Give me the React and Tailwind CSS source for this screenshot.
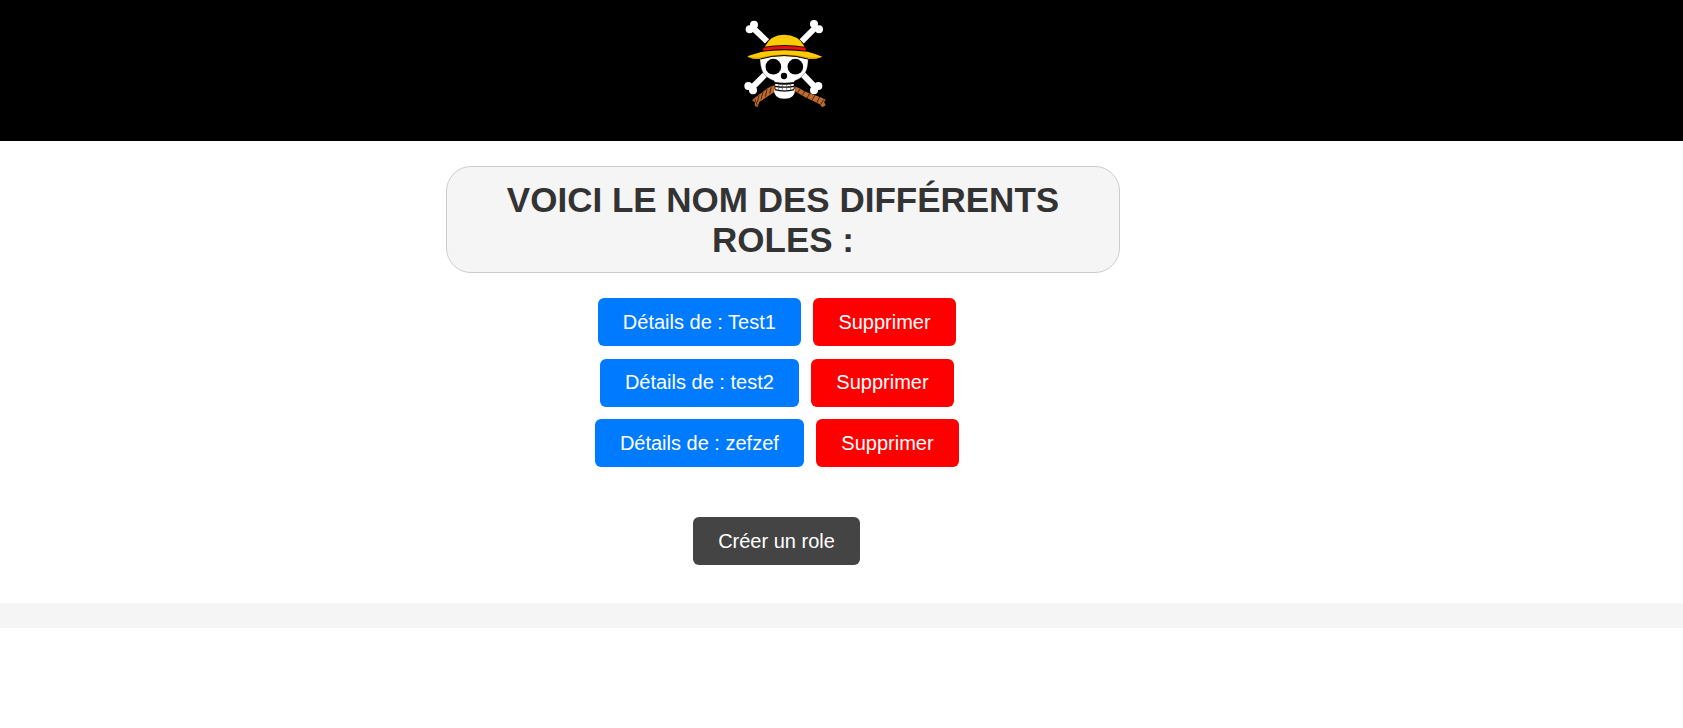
const roles = ['Test1', 'test2', 'zefzef'];

function Bone({ x1, y1, x2, y2, knobs }) {
  return (
    <g fill="#fff" stroke="#fff">
      <line x1={x1} y1={y1} x2={x2} y2={y2} strokeWidth="18" />
      {knobs.map(([cx, cy]) => (
        <circle key={cx} cx={cx} cy={cy} r="12" stroke="none" />
      ))}
    </g>
  );
}

function Logo() {
  return (
    <svg className="h-[105px] w-[100px]" viewBox="0 0 300 315">
      <Bone x1={54} y1={54} x2={96} y2={94} knobs={[[57, 44], [44, 58]]} />
      <Bone x1={240} y1={54} x2={200} y2={94} knobs={[[237, 42], [252, 58]]} />
      <Bone x1={52} y1={232} x2={92} y2={192} knobs={[[40, 228], [54, 241]]} />
      <Bone x1={241} y1={232} x2={204} y2={194} knobs={[[250, 228], [237, 241]]} />
      <path d="M75 128 Q147 118 219 128 Q222 168 211 188 Q200 205 178 213 L178 217 Q148 221 118 217 L118 213 Q93 204 83 186 Q73 166 75 128Z" fill="#fff" stroke="#000" strokeWidth="1" />
      <circle cx="115" cy="170" r="23.5" />
      <circle cx="181" cy="170" r="23.5" />
      <circle cx="147" cy="198" r="9.5" />
      <path d="M130 225 Q106 225 86 244 L59 264 L51 271 L60 277 L59 287 L68 291 L73 276 L103 256 L132 237Z" fill="#bd6b2c" />
      <path d="M169 226 Q188 231 208 244 L260 263 L272 269 L267 276 L272 286 L262 292 L253 282 L205 259 L169 237Z" fill="#bd6b2c" />
      <path d="M121 227 L118 243 M108 232 L104 251 M96 238 L91 260 M84 246 L78 268 M72 256 L67 276 M60 268 L67 286 M180 229 L178 242 M196 236 L188 248 M210 243 L201 257 M225 249 L216 264 M240 255 L231 271 M254 261 L245 278 M266 269 L257 284" fill="none" stroke="#4a250e" strokeWidth="3" />
      <path d="M117 236 Q148 252 180 236 Q181 266 148 266 Q116 266 117 236Z" fill="#fff" />
      <path d="M120 221 Q148 226 177 221 L174 239 Q148 245 123 239Z" fill="#fff" />
      <path d="M118 219 Q148 224 179 219 M120 229 Q148 234 177 229 M119 239 Q148 247 178 239" fill="none" stroke="#000" strokeWidth="3.5" />
      <path d="M131 221 V241 M142 221 V243 M155 221 V243 M167 221 V241" fill="none" stroke="#555" strokeWidth="2" />
      <path d="M37 139 Q58 132 87 124 L91 108 Q106 75 147 74 Q190 75 207 107 L213 124 Q241 132 262 140 Q247 147 219 147 Q147 125 76 147 Q51 148 37 139Z" fill="#fecb00" />
      <path d="M38 140 Q52 144 76 142 Q147 124 219 142 Q245 144 261 140 Q245 149 219 147 Q147 130 76 147 Q50 148 38 140Z" fill="#dfa400" />
      <path d="M87 110 Q148 100 210 110 L215 125 Q148 116 81 125Z" fill="#111" />
      <path d="M86 113 Q148 103 211 113 L213 122 Q148 112 83 122Z" fill="#f20d0d" />
      <path d="M76 147 Q147 126 219 147" fill="none" stroke="#000" strokeWidth="3" />
    </svg>
  );
}

export default function App() {
  return (
    <div className="min-h-screen bg-white font-['Liberation_Sans',Arial,sans-serif] text-xl text-white">
      <header className="h-[141px] bg-black pt-2.5 pl-[735px]">
        <Logo />
      </header>
      <main className="flex h-[462px] flex-col items-start pt-[25px]">
        <h1 className="ml-[446px] h-[107px] w-[674px] rounded-[25px] border border-[#ccc] bg-[#f5f5f5] px-[25px] pt-[13px] text-center text-[35px] leading-10 font-bold text-[#333] uppercase">
          <span className="block">Voici le nom des différents</span>
          <span className="block">roles :</span>
        </h1>
        <ul className="mt-[25px] flex w-[1554px] flex-col gap-[12.5px]">
          {roles.map((role) => (
            <li key={role} className="flex justify-center gap-3">
              <button className="h-12 rounded-md bg-[#007bff] pr-[25.5px] pb-[0.4px] pl-[24.5px]">Détails de : {role}</button>
              <button className="h-12 rounded-md bg-[#ff0000] px-[25px] pb-[0.4px]">Supprimer</button>
            </li>
          ))}
        </ul>
        <div className="mt-[50px] flex w-[1553px] justify-center">
          <button className="h-12 rounded-md bg-[#444] px-[25px]">Créer un role</button>
        </div>
      </main>
      <footer className="h-[25px] bg-[#f5f5f5]" />
    </div>
  );
}
